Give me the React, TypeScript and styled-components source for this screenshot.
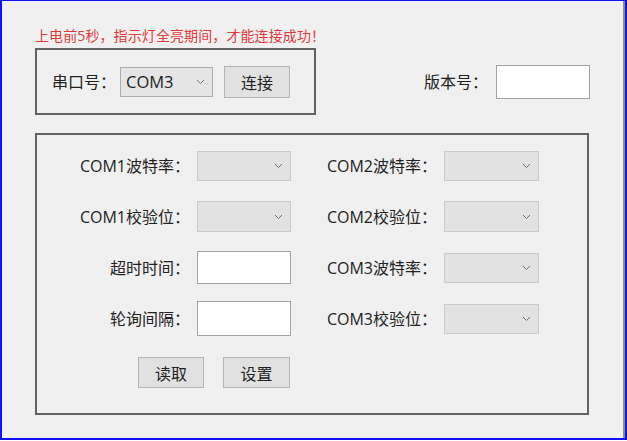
import React from "react";
import styled, { createGlobalStyle } from "styled-components";

const GlobalStyle = createGlobalStyle`
  html, body {
    margin: 0;
    padding: 0;
    background: #ffffff;
  }
  body {
    font-family: "Open Sans", "Noto Sans CJK SC", sans-serif;
    color: #222;
  }
`;

const Window = styled.div`
  box-sizing: border-box;
  width: 627px;
  height: 440px;
  background: #f0f0f0;
  border-top: 1px solid #1010f0;
  border-left: 2px solid #1010f0;
  border-right: 2px solid #1010f0;
  border-bottom: 2px solid #1010f0;
  box-shadow: inset -2px 0 0 #8c8c8c;
  padding: 26px 0 0 33px;
`;

const Content = styled.div`
  width: 555px;
  display: flex;
  flex-direction: column;
`;

const Warning = styled.div`
  color: #e23a3a;
  font-size: 14px;
  line-height: 17px;
  white-space: nowrap;
  letter-spacing: 0.1px;
`;

const TopRow = styled.div`
  margin-top: 4px;
  display: flex;
  align-items: center;
  justify-content: space-between;
`;

const GroupBox = styled.div<{ $w: number; $h: number }>`
  box-sizing: border-box;
  width: ${(p) => p.$w}px;
  height: ${(p) => p.$h}px;
  border: 2px solid #626262;
`;

const PortBox = styled(GroupBox)`
  display: flex;
  align-items: center;
  padding-left: 15px;
`;

const Label = styled.span<{ $w?: number }>`
  font-size: 16px;
  line-height: 20px;
  white-space: nowrap;
  ${(p) => (p.$w ? `width: ${p.$w}px; text-align: right;` : "")}
`;

const Combo = styled.div<{ $w: number; $h: number; $disabled?: boolean }>`
  box-sizing: border-box;
  width: ${(p) => p.$w}px;
  height: ${(p) => p.$h}px;
  background: ${(p) => (p.$disabled ? "#e2e2e2" : "#e5e5e5")};
  border: 1px solid ${(p) => (p.$disabled ? "#cacaca" : "#adadad")};
  display: flex;
  align-items: center;
  justify-content: space-between;
  padding: 0 7px 0 5px;
  font-size: 16.5px;
  color: #222;
`;

const Button = styled.div<{ $w: number; $h: number }>`
  box-sizing: border-box;
  width: ${(p) => p.$w}px;
  height: ${(p) => p.$h}px;
  background: #e1e1e1;
  border: 1px solid #b4b4b4;
  display: flex;
  align-items: center;
  justify-content: center;
  font-size: 16px;
  color: #222;
`;

const TextBox = styled.div<{ $w: number; $h: number }>`
  box-sizing: border-box;
  width: ${(p) => p.$w}px;
  height: ${(p) => p.$h}px;
  background: #ffffff;
  border: 1px solid #a3a3a3;
`;

const Version = styled.div`
  display: flex;
  align-items: center;
  gap: 8px;
`;

const SettingsBox = styled(GroupBox)`
  margin-top: 18px;
  padding-top: 5px;
  display: flex;
  flex-direction: column;
`;

const FieldGrid = styled.div`
  display: grid;
  grid-template-columns: 254px 214px;
  grid-auto-rows: 51px;
  column-gap: 34px;
`;

const Field = styled.div`
  display: flex;
  align-items: center;
  gap: 7px;
`;

const Actions = styled.div`
  margin-top: 13px;
  padding-left: 101px;
  display: flex;
  gap: 19px;
`;

const Chevron = () => (
  <svg width="9" height="6" viewBox="0 0 9 6">
    <path d="M1 1 L4.5 4.5 L8 1" fill="none" stroke="#707070" strokeWidth="1" />
  </svg>
);

type FieldDef = { label: string; kind: "combo" | "text"; h: number };

const left: FieldDef[] = [
  { label: "COM1波特率：", kind: "combo", h: 30 },
  { label: "COM1校验位：", kind: "combo", h: 31 },
  { label: "超时时间：", kind: "text", h: 33 },
  { label: "轮询间隔：", kind: "text", h: 35 },
];

const right: FieldDef[] = [
  { label: "COM2波特率：", kind: "combo", h: 30 },
  { label: "COM2校验位：", kind: "combo", h: 31 },
  { label: "COM3波特率：", kind: "combo", h: 30 },
  { label: "COM3校验位：", kind: "combo", h: 30 },
];

function renderField(f: FieldDef, labelW: number, ctrlW: number) {
  return (
    <Field key={f.label}>
      <Label $w={labelW}>{f.label}</Label>
      {f.kind === "combo" ? (
        <Combo $w={ctrlW} $h={f.h} $disabled>
          <span />
          <Chevron />
        </Combo>
      ) : (
        <TextBox $w={ctrlW} $h={f.h} />
      )}
    </Field>
  );
}

export default function App() {
  return (
    <>
      <GlobalStyle />
      <Window>
        <Content>
          <Warning>上电前5秒，指示灯全亮期间，才能连接成功！</Warning>
          <TopRow>
            <PortBox $w={281} $h={67}>
              <Label>串口号：</Label>
              <Combo $w={93} $h={30} style={{ marginLeft: 4 }}>
                <span>COM3</span>
                <Chevron />
              </Combo>
              <Button $w={66} $h={32} style={{ marginLeft: 11 }}>
                连接
              </Button>
            </PortBox>
            <Version>
              <Label>版本号：</Label>
              <TextBox $w={94} $h={34} />
            </Version>
          </TopRow>
          <SettingsBox $w={554} $h={282}>
            <FieldGrid>
              {left.map((f, i) => (
                <React.Fragment key={i}>
                  {renderField(f, 153, 94)}
                  {renderField(right[i], 112, 95)}
                </React.Fragment>
              ))}
            </FieldGrid>
            <Actions>
              <Button $w={66} $h={31}>读取</Button>
              <Button $w={67} $h={31}>设置</Button>
            </Actions>
          </SettingsBox>
        </Content>
      </Window>
    </>
  );
}
